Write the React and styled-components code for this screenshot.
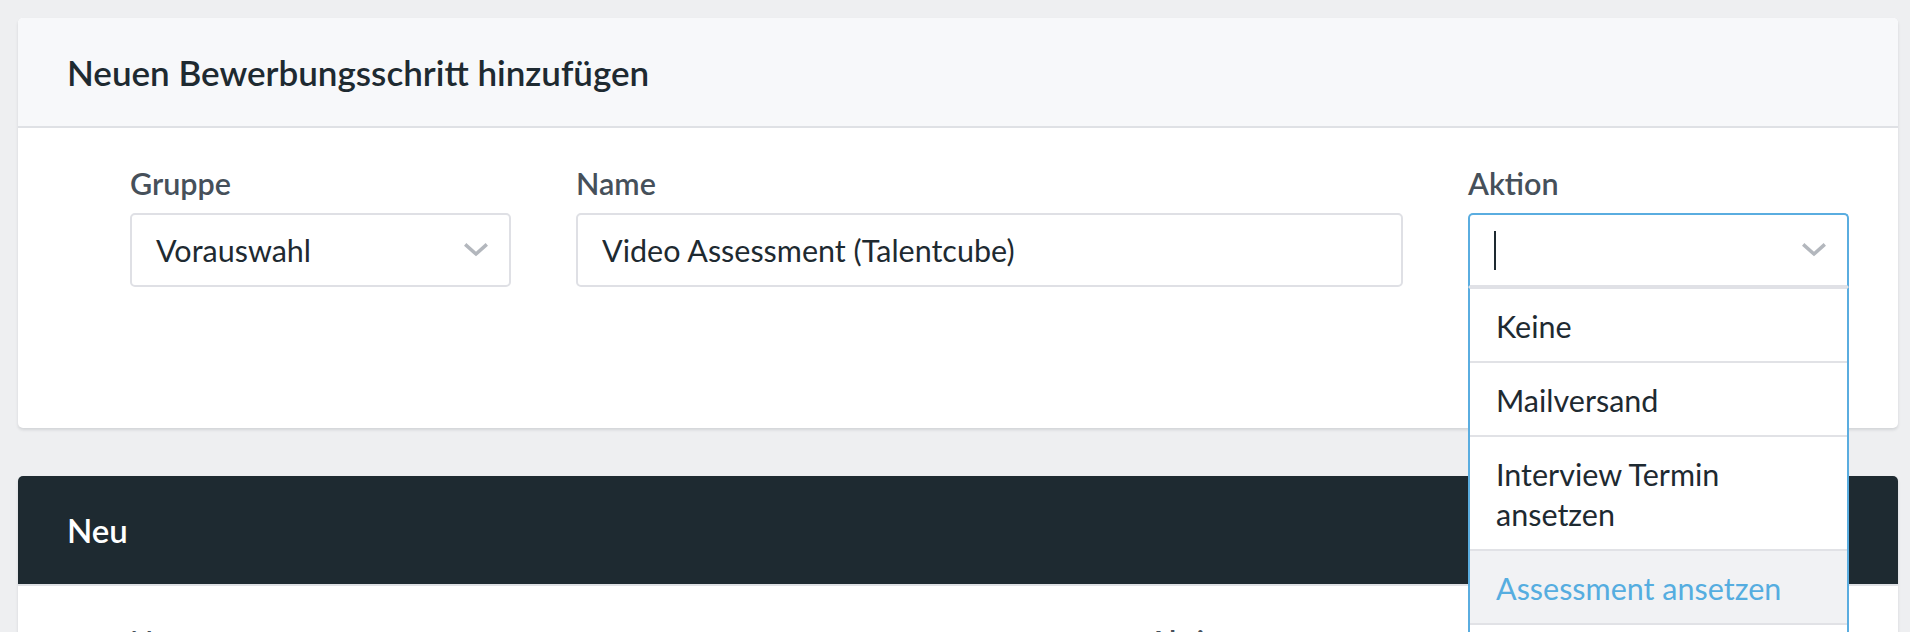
import styled, { createGlobalStyle } from "styled-components";

const GlobalStyle = createGlobalStyle`
  html, body {
    margin: 0;
    padding: 0;
    overflow: hidden;
    background: #eeeff1;
  }
  body {
    font-family: Lato, "Liberation Sans", sans-serif;
    color: #1e2a31;
  }
`;

const Page = styled.div`
  box-sizing: border-box;
  height: 100vh;
  overflow: hidden;
  padding: 18px 12px 0 18px;
  display: flex;
  flex-direction: column;
  gap: 48px;
`;

const Card = styled.section`
  position: relative;
  z-index: ${(p) => (p.$raised ? 2 : 1)};
  background: #fff;
  border-radius: 5px;
  box-shadow: 0 2px 3px rgba(30, 42, 49, 0.13);
`;

const CardHeader = styled.header`
  box-sizing: border-box;
  height: 110px;
  display: flex;
  align-items: center;
  padding: 0 49px;
  background: ${(p) => (p.$dark ? "#1e2a31" : "#f7f8fa")};
  border-bottom: 2px solid #dfe1e5;
  border-radius: 5px 5px 0 0;
`;

const Title = styled.h2`
  margin: 0;
  font-size: ${(p) => (p.$dark ? 33 : 35)}px;
  font-weight: 600;
  color: ${(p) => (p.$dark ? "#ffffff" : "#1e2a31")};
`;

const FormRow = styled.div`
  display: grid;
  grid-template-columns: ${(p) => p.$columns};
  column-gap: 65px;
  padding: 37px 49px ${(p) => p.$bottom}px 112px;
`;

const Field = styled.div`
  display: flex;
  flex-direction: column;
  gap: 12px;
`;

const Label = styled.label`
  font-size: 30.5px;
  font-weight: 600;
  line-height: 36px;
  color: #46505a;
`;

const SelectWrap = styled.div`
  position: relative;
`;

const Control = styled.div`
  box-sizing: border-box;
  height: 74px;
  display: flex;
  align-items: center;
  justify-content: space-between;
  padding: 0 21px 0 24px;
  background: #fff;
  border: 2px solid ${(p) => (p.$open ? "#5aade0" : "#dfe0e5")};
  border-bottom-color: ${(p) => (p.$open ? "#e0e1e6" : "#dfe0e5")};
  border-radius: ${(p) => (p.$open ? "5px 5px 0 0" : "5px")};
  font-size: 30.5px;
  color: #1e2a31;
`;

const TextInput = styled.input`
  box-sizing: border-box;
  width: 100%;
  height: 74px;
  margin: 0;
  padding: 0 24px;
  background: #fff;
  border: 2px solid #dfe0e5;
  border-radius: 5px;
  font-family: inherit;
  font-size: 30.5px;
  color: #1e2a31;
  outline: none;
`;

const Caret = styled.span`
  display: block;
  width: 2px;
  height: 39px;
  background: #1e2a31;
`;

const Menu = styled.ul`
  position: absolute;
  top: 100%;
  left: 0;
  right: 0;
  margin: 0;
  padding: 0;
  list-style: none;
  background: #fff;
  border-left: 2px solid #5aade0;
  border-right: 2px solid #5aade0;
  border-top: 2px solid #e0e1e6;
`;

const Option = styled.li`
  padding: 17px 26px 15px;
  line-height: 40px;
  font-size: 30.5px;
  color: ${(p) => (p.$active ? "#55ade0" : "#1e2a31")};
  background: ${(p) => (p.$active ? "#f1f2f4" : "#fff")};
  border-bottom: 2px solid #e1e2e6;
`;

const Chevron = () => (
  <svg width="24" height="14" viewBox="0 0 24 14" fill="none">
    <polyline
      points="2.5,2.5 12,11 21.5,2.5"
      stroke="#b3b7bd"
      strokeWidth="3.5"
      strokeLinecap="square"
    />
  </svg>
);

const actions = [
  "Keine",
  "Mailversand",
  "Interview Termin ansetzen",
  "Assessment ansetzen",
  "Video Assessment",
];

export default function App() {
  return (
    <>
      <GlobalStyle />
      <Page>
        <Card $raised>
          <CardHeader>
            <Title>Neuen Bewerbungsschritt hinzufügen</Title>
          </CardHeader>
          <FormRow $columns="381px 827px 381px" $bottom={141}>
            <Field>
              <Label>Gruppe</Label>
              <Control>
                <span>Vorauswahl</span>
                <Chevron />
              </Control>
            </Field>
            <Field>
              <Label>Name</Label>
              <TextInput value="Video Assessment (Talentcube)" readOnly />
            </Field>
            <Field>
              <Label>Aktion</Label>
              <SelectWrap>
                <Control $open>
                  <Caret />
                  <Chevron />
                </Control>
                <Menu>
                  {actions.map((a) => (
                    <Option key={a} $active={a === "Assessment ansetzen"}>
                      {a}
                    </Option>
                  ))}
                </Menu>
              </SelectWrap>
            </Field>
          </FormRow>
        </Card>

        <Card>
          <CardHeader $dark>
            <Title $dark>Neu</Title>
          </CardHeader>
          <FormRow $columns="953px 1fr" $bottom={60}>
            <Field>
              <Label>Name</Label>
              <TextInput value="" readOnly />
            </Field>
            <Field>
              <Label>Aktion</Label>
              <Control>
                <span>Keine</span>
                <Chevron />
              </Control>
            </Field>
          </FormRow>
        </Card>
      </Page>
    </>
  );
}
